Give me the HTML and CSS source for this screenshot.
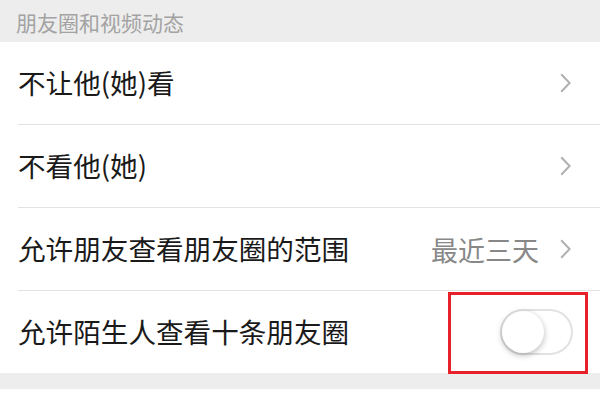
FILE: index.html
```html
<!DOCTYPE html>
<html>
<head>
    <meta charset="utf-8">
    <title>朋友圈和视频动态</title>
    <link rel="stylesheet" href="styles.css">
</head>
<body>
    <div class="page">
        <div class="section-title">朋友圈和视频动态</div>

        <div class="list">
            <div class="row">
                <span class="label">不让他(她)看</span>
                <svg class="chevron" width="11" height="20" viewBox="0 0 11 20"><path d="M1.2 1.2 L9.6 10 L1.2 18.8" fill="none" stroke="#b0b0b0" stroke-width="2"/></svg>
            </div>
            <div class="row">
                <span class="label">不看他(她)</span>
                <svg class="chevron" width="11" height="20" viewBox="0 0 11 20"><path d="M1.2 1.2 L9.6 10 L1.2 18.8" fill="none" stroke="#b0b0b0" stroke-width="2"/></svg>
            </div>
            <div class="row">
                <span class="label">允许朋友查看朋友圈的范围</span>
                <span class="value">最近三天</span>
                <svg class="chevron" width="11" height="20" viewBox="0 0 11 20"><path d="M1.2 1.2 L9.6 10 L1.2 18.8" fill="none" stroke="#b0b0b0" stroke-width="2"/></svg>
            </div>
            <div class="row row-switch">
                <span class="label">允许陌生人查看十条朋友圈</span>
                <div class="switch"><div class="knob"></div></div>
            </div>
        </div>

        <div class="gap"></div>

        <div class="highlight"></div>
    </div>
</body>
</html>
```

FILE: styles.css
```css
body {
    margin: 0;
    background-color: #fff;
    font-family: "Noto Sans CJK SC", "Noto Sans", sans-serif;
}

.page {
    position: relative;
    width: 600px;
    height: 400px;
    overflow: hidden;
}

.section-title {
    height: 42px;
    line-height: 44px;
    padding-left: 16px;
    background-color: #ededed;
    color: #a3a3a3;
    font-size: 21px;
}

.list {
    background-color: #fff;
}

.row {
    display: flex;
    align-items: center;
    height: 82px;
    margin-left: 18px;
    padding-right: 29px;
    border-top: 1px solid #e3e3e3;
}

.row:first-child {
    border-top: none;
}

.label {
    flex: 1;
    font-size: 27.6px;
    color: #1a1a1a;
    line-height: 1;
}

.value {
    font-size: 27px;
    color: #888;
    line-height: 1;
    margin-right: 21px;
}

.chevron {
    display: block;
}

.row-switch {
    padding-right: 27px;
}

.switch {
    position: relative;
    width: 69px;
    height: 42px;
    border: 2px solid #e2e2e2;
    border-radius: 23px;
    background-color: #fff;
}

.knob {
    position: absolute;
    left: 0;
    top: 0;
    width: 42px;
    height: 42px;
    border-radius: 50%;
    background-color: #fff;
    box-shadow: 0 2px 6px rgba(0, 0, 0, 0.28);
}

.gap {
    height: 16px;
    background-color: #ededed;
}

.highlight {
    position: absolute;
    left: 448px;
    top: 292px;
    width: 134px;
    height: 76px;
    border: 3px solid #e8202a;
}
```
